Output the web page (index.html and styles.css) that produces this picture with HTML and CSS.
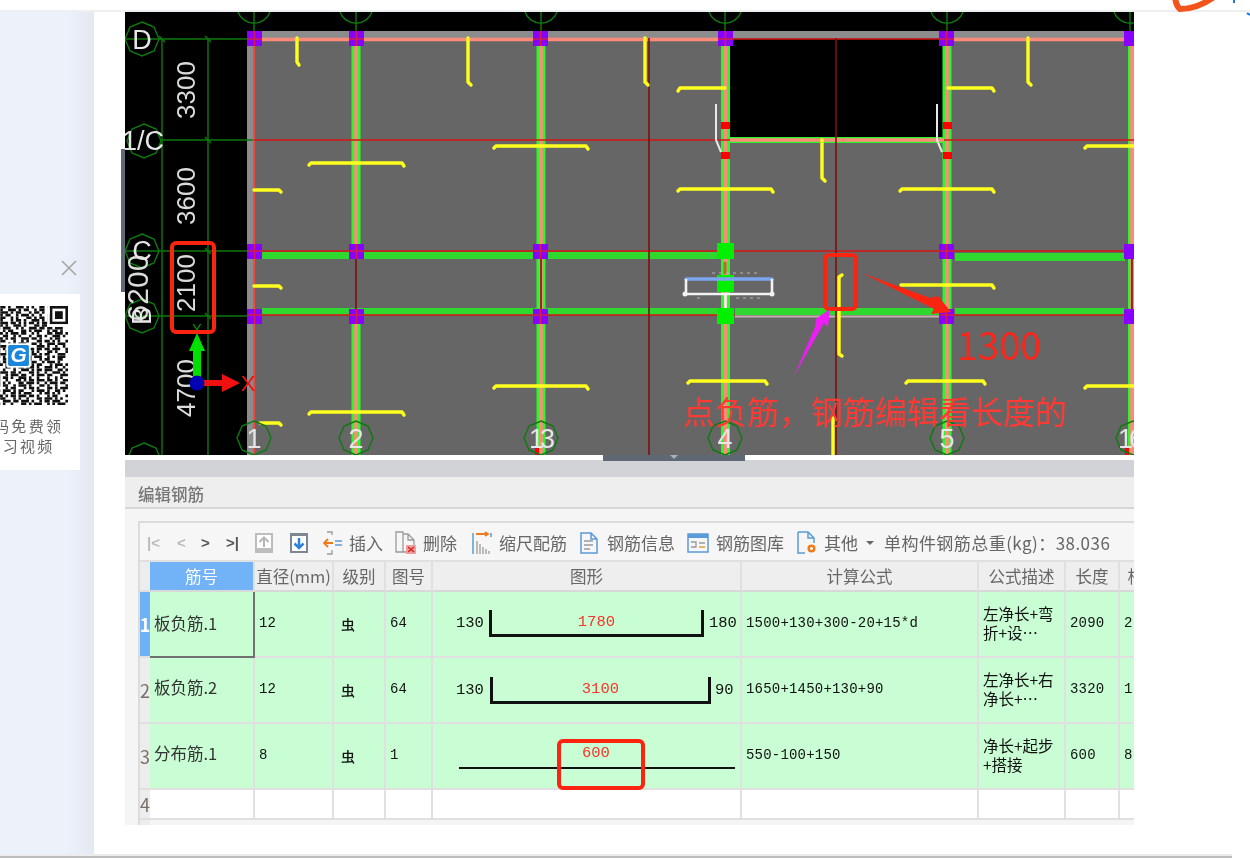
FILE: index.html
```html
<!DOCTYPE html>
<html lang="zh-CN">
<head>
<meta charset="utf-8">
<title>编辑钢筋</title>
<link rel="stylesheet" href="styles.css">
</head>
<body>
<div class="page">
  <header class="topbar">
    <svg class="brand" viewBox="0 0 80 14" width="80" height="14" aria-hidden="true">
      <path class="brand-o" d="M3 -3Q4 6 8 9Q25 9 42 -3"/>
      <path class="brand-b" d="M62 0v3"/>
      <path class="brand-b" d="M75 13q2 2 5 2"/>
    </svg>
  </header>
  <div class="main">
    <aside class="side">
      <svg class="close" viewBox="0 0 16 16" width="16" height="16" aria-hidden="true"><path d="M1 1L15 15M15 1L1 15"/></svg>
      <div class="qr-card">
        <div class="qr">
          <svg viewBox="0 0 38 38" width="99" height="99" aria-hidden="true">
            <g class="qr-rows">
              <path d="M12 .5H38" stroke-dasharray="2 1 1 2 3 1 1 1 1 2 2 1 1 9"/>
              <path d="M12 1.5H38" stroke-dasharray="1 2 3 1 1 1 2 2 1 1 2 11"/>
              <path d="M12 2.5H38" stroke-dasharray="3 1 1 1 2 3 1 1 2 1 1 9"/>
              <path d="M12 3.5H38" stroke-dasharray="1 1 2 2 1 1 3 1 1 2 1 2 1 9"/>
              <path d="M12 4.5H38" stroke-dasharray="2 2 1 1 1 3 2 1 1 1 2 1 2 9"/>
              <path d="M12 5.5H38" stroke-dasharray="1 3 1 1 2 1 1 2 3 1 1 1 2 9"/>
              <path d="M12 6.5H38" stroke-dasharray="3 1 2 1 1 1 1 1 2 1 1 1 3 9"/>
              <path d="M12 7.5H38" stroke-dasharray="1 1 1 2 3 1 1 3 2 1 2 9"/>
              <path d="M0 8.5H38" stroke-dasharray="2 1 3 2 1 1 2 1 3 2 1 1 1 2 3 1 2 1 2 1 3"/>
              <path d="M0 9.5H38" stroke-dasharray="1 2 2 1 3 1 1 2 1 1 2 3 2 1 1 1 3 2 1 1 2 1"/>
              <path d="M0 10.5H38" stroke-dasharray="3 1 1 2 1 3 2 1 1 1 3 1 2 2 1 1 1 3 2 1"/>
              <path d="M0 11.5H38" stroke-dasharray="1 1 3 1 2 1 1 3 2 2 1 1 1 3 1 2 2 1 1 2 3"/>
              <path d="M0 12.5H38" stroke-dasharray="2 3 1 1 1 2 3 1 1 1 2 2 3 1 2 1 1 3 1 1"/>
              <path d="M0 13.5H38" stroke-dasharray="1 1 2 2 3 1 1 1 2 3 1 2 1 1 1 3 2 1 2 1 1"/>
              <path d="M0 14.5H38" stroke-dasharray="3 2 1 1 2 1 2 3 1 1 1 1 3 2 2 1 1 2 3 1"/>
              <path d="M0 15.5H38" stroke-dasharray="1 2 1 3 1 2 1 1 3 2 1 1 2 1 1 3 3 1 1 2"/>
              <path d="M0 16.5H38" stroke-dasharray="2 1 1 1 3 2 2 1 1 3 1 2 1 1 3 1 2 1 2 1 3"/>
              <path d="M0 17.5H38" stroke-dasharray="1 3 2 1 1 1 3 2 2 1 3 1 1 2 1 1 1 3 2 1"/>
              <path d="M0 18.5H38" stroke-dasharray="3 1 1 2 2 1 1 1 3 1 2 2 1 3 2 1 1 1 2 3"/>
              <path d="M0 19.5H38" stroke-dasharray="1 1 3 1 1 3 2 1 1 2 1 1 3 1 2 1 3 2 1 1"/>
              <path d="M0 20.5H38" stroke-dasharray="2 2 1 1 3 1 1 2 3 1 2 1 1 2 1 3 1 1 2 3"/>
              <path d="M0 21.5H38" stroke-dasharray="1 3 3 1 1 2 1 1 2 3 1 1 3 1 2 2 1 1 3 1"/>
              <path d="M0 22.5H38" stroke-dasharray="3 1 2 2 1 1 3 1 1 1 2 3 1 2 1 1 2 3 1 1"/>
              <path d="M0 23.5H38" stroke-dasharray="1 2 1 1 2 3 1 3 2 1 1 1 2 1 3 1 1 2 3 1"/>
              <path d="M0 24.5H38" stroke-dasharray="2 1 3 1 1 1 2 2 1 3 1 2 3 1 1 1 2 1 3 2"/>
              <path d="M0 25.5H38" stroke-dasharray="1 1 1 3 2 2 1 1 3 1 2 1 1 3 2 1 1 2 1 2 3"/>
              <path d="M0 26.5H38" stroke-dasharray="3 2 1 1 1 3 1 2 1 1 3 1 2 2 1 1 3 1 2 3"/>
              <path d="M0 27.5H38" stroke-dasharray="1 1 2 3 1 1 3 1 2 1 1 2 3 1 1 2 1 3 1 2 1"/>
              <path d="M0 28.5H38" stroke-dasharray="2 3 1 1 3 1 1 2 1 3 2 1 1 1 2 1 3 1 2 1 1"/>
              <path d="M0 29.5H38" stroke-dasharray="1 2 2 1 1 2 3 1 1 1 1 3 2 1 3 1 1 2 1 1 3"/>
              <path d="M0 30.5H38" stroke-dasharray="3 1 1 1 2 3 1 1 2 2 1 1 3 1 1 3 2 1 1 2 1"/>
              <path d="M0 31.5H38" stroke-dasharray="1 3 2 2 1 1 1 3 1 1 2 3 1 1 2 1 1 3 2 1 1"/>
              <path d="M0 32.5H38" stroke-dasharray="2 1 1 3 1 2 2 1 3 1 1 1 2 3 1 1 3 1 1 2"/>
              <path d="M0 33.5H38" stroke-dasharray="1 1 3 1 2 1 1 3 1 2 2 1 1 1 3 3 1 1 2 1 1"/>
              <path d="M0 34.5H38" stroke-dasharray="3 2 1 2 1 1 3 1 1 1 2 1 3 1 2 1 1 3 1 1 2"/>
              <path d="M0 35.5H38" stroke-dasharray="1 1 2 1 3 2 1 1 2 3 1 1 1 2 1 3 2 1 3 1 1"/>
              <path d="M0 36.5H38" stroke-dasharray="2 2 1 3 1 1 1 2 3 1 2 1 3 1 1 2 1 1 2 1 3"/>
              <path d="M0 37.5H38" stroke-dasharray="1 3 2 1 1 3 1 1 1 2 1 3 2 1 1 1 3 2 1 1 1"/>
            </g>
            <rect class="qr-ink" x="31" y="0" width="7" height="7"/>
            <rect class="qr-paper" x="32" y="1" width="5" height="5"/>
            <rect class="qr-ink" x="33" y="2" width="3" height="3"/>
            <rect class="qr-paper" x="30" y="0" width="1" height="8"/>
            <rect class="qr-paper" x="30" y="7" width="8" height="1"/>
            <rect class="qr-logo-edge" x="14.3" y="14.3" width="9.4" height="9.4" rx="1"/>
            <rect class="qr-logo" x="15" y="15" width="8" height="8" rx=".6"/>
            <text class="qr-g" x="19" y="21.6">G</text>
          </svg>
        </div>
        <p class="qr-text">扫码免费领<br>学习视频</p>
      </div>
    </aside>

    <section class="content">
      <div class="cad">
        <svg class="cad-svg" viewBox="125 12 1009 443" width="1009" height="443" role="img" aria-label="结构平面图">
          <defs>
            <polygon id="oct" points="0,-17 12,-12 17,0 12,12 0,17 -12,12 -17,0 -12,-12"/>
          </defs>
          <rect class="c-black" x="125" y="12" width="1009" height="443"/>
          <rect class="c-floor" x="247" y="31" width="887" height="424"/>
          <rect class="c-strip" x="247" y="31" width="887" height="7"/>
          <rect class="c-strip" x="247" y="31" width="7" height="424"/>
          <rect class="c-black" x="730" y="39" width="214" height="98"/>

          <!-- axis lines -->
          <g class="l-axis">
            <path d="M162 39V455M208 39V455"/>
            <path d="M125 39H254M160 140H254M125 251H254M125 316H254"/>
            <path d="M254 12V38M356 12V38M541 12V38M725 12V38M947 12V38M1130 12V38"/>
            <path d="M159 36l6 6M205 36l6 6M205 137l6 6M205 248l6 6M205 313l6 6"/>
            <path d="M238 12a17 17 0 0 0 32 0M340 12a17 17 0 0 0 32 0M525 12a17 17 0 0 0 32 0M709 12a17 17 0 0 0 32 0M931 12a17 17 0 0 0 32 0M1114 12a17 17 0 0 0 32 0"/>
            <use href="#oct" x="142" y="39"/>
            <use href="#oct" x="144" y="141"/>
            <use href="#oct" x="142" y="251"/>
            <use href="#oct" x="142" y="316"/>
            <use href="#oct" x="144" y="460"/>
          </g>

          <!-- beams -->
          <g class="b-green">
            <rect x="351.500" y="38" width="9" height="213"/>
            <rect x="351.500" y="316" width="9" height="139"/>
            <rect x="536.500" y="38" width="9" height="417"/>
            <rect x="721" y="38" width="9" height="417"/>
            <rect x="942.500" y="38" width="9" height="417"/>
            <rect x="1128" y="38" width="6" height="417"/>
            <rect x="725" y="137" width="222" height="6"/>
          </g>
          <g class="b-green-h">
            <rect x="262" y="252" width="455" height="7"/>
            <rect x="955" y="253" width="170" height="8"/>
            <rect x="262" y="308" width="455" height="7"/>
            <rect x="735" y="308" width="205" height="7"/>
            <rect x="955" y="308" width="170" height="7"/>
          </g>
          <g class="b-salmon">
            <path d="M254 39.500H730M944 39.500H1134"/>
            <path d="M356 38V251M356 316V455M541 38V455M725.500 38V455M947 38V455M1132 38V455"/>
            <path d="M730 140H944"/>
          </g>
          <path class="b-pale" d="M735 316.500H940"/>
          <path class="b-edge" d="M254 38V455"/>
          <g class="l-red">
            <path d="M254 140H730M944 140H1134M254 251H1134M254 315H735M940 315H1134M730 39H944"/>
          </g>
          <g class="l-dark">
            <path d="M649 38V455M836 38V455M356 251V316M541 251V316M1132 251V316"/>
          </g>

          <!-- columns -->
          <g class="col">
            <rect x="247" y="31" width="15" height="15"/><rect x="349" y="31" width="15" height="15"/><rect x="533" y="31" width="15" height="15"/><rect x="718" y="31" width="15" height="15"/><rect x="939" y="31" width="15" height="15"/><rect x="1124" y="31" width="10" height="15"/>
            <rect x="247" y="244" width="15" height="15"/><rect x="349" y="244" width="15" height="15"/><rect x="533" y="244" width="15" height="15"/><rect x="939" y="244" width="15" height="15"/><rect x="1124" y="244" width="10" height="15"/>
            <rect x="247" y="309" width="15" height="15"/><rect x="349" y="309" width="15" height="15"/><rect x="533" y="309" width="15" height="15"/><rect x="939" y="309" width="15" height="15"/><rect x="1124" y="309" width="10" height="15"/>
          </g>
          <g class="col-cross">
            <path d="M247 39H262M349 39H364M533 39H548M718 39H733M939 39H954M247 251H262M349 251H364M533 251H548M939 251H954M247 315H262M349 315H364M533 315H548M939 315H954"/>
            <path d="M254.500 31V46M356.500 31V46M540.500 31V46M725.500 31V46M946.500 31V46M254.500 244V259M356.500 244V259M540.500 244V259M946.500 244V259M254.500 309V324M356.500 309V324M540.500 309V324M946.500 309V324"/>
          </g>

          <!-- bars -->
          <g class="bar-y">
            <path d="M297 38V62l2 3"/><path d="M468 38V82l3 3"/><path d="M645 38V82l3 3"/><path d="M1028 38V82l3 3"/><path d="M822 140V178l3 3"/>
            <path d="M309 165l2-2H402l2 3"/><path d="M494 148l2-2H586l2 3"/><path d="M678 91l2-3H725"/><path d="M678 191l2-2H771l2 3"/>
            <path d="M948 88H992l2 3"/><path d="M900 191l2-2H992l2 3"/><path d="M901 285H992l2 3"/><path d="M1085 148l2-2H1134"/><path d="M1085 388l2-2H1134"/>
            <path d="M254 190H279l2 2"/><path d="M254 286H279l2 2"/><path d="M309 414l2-2H402l2 3"/><path d="M260 423H279l2 2"/><path d="M494 388l2-2H586l2 3"/>
            <path d="M688 383l2-2H765l2 3"/><path d="M906 383l2-2H983l2 3"/>
            <path d="M842 275l-3 2V354l3 2"/><path d="M833 418V455"/>
          </g>

          <!-- selected element -->
          <g class="col-g">
            <rect x="717" y="243" width="17" height="16"/><rect x="717" y="275" width="17" height="17"/><rect x="717" y="308" width="17" height="16"/>
          </g>
          <path class="el-blue" d="M686 279H772"/>
          <path class="el-white" d="M686 279V294H772V279M725.500 294V308"/>
          <circle class="el-dot" cx="685" cy="294" r="2.500"/><circle class="el-dot" cx="772" cy="294" r="2.500"/>
          <path class="el-tick" d="M725 262V274"/>
          <path class="el-fleck" d="M712 273H758M697 298H700M736 298H760"/>
          <g class="col-r">
            <rect x="721" y="122" width="9" height="7"/><rect x="721" y="152" width="9" height="7"/><rect x="943" y="122" width="9" height="7"/><rect x="943" y="152" width="9" height="7"/>
            <rect x="535" y="447" width="4" height="8"/><rect x="1125" y="447" width="4" height="8"/>
          </g>
          <path class="el-thin" d="M716 104V140L721 152"/>
          <path class="el-thin" d="M937 104V140L942 152"/>

          <!-- bottom axis bubbles -->
          <g class="l-axis">
            <use href="#oct" x="254" y="438"/><use href="#oct" x="356" y="438"/><use href="#oct" x="541" y="438"/><use href="#oct" x="725" y="438"/><use href="#oct" x="947" y="438"/><use href="#oct" x="1133" y="438"/>
          </g>

          <!-- labels -->
          <g class="t-dim">
            <text x="186" y="99" transform="rotate(-90 186 90)">3300</text>
            <text x="186" y="205" transform="rotate(-90 186 196)">3600</text>
            <text x="186" y="292" transform="rotate(-90 186 283)">2100</text>
            <text x="186" y="397" transform="rotate(-90 186 388)">4700</text>
          </g>
          <text class="t-dim t-big" x="138" y="298" transform="rotate(-90 138 288)">6200</text>
          <g class="t-axis">
            <text x="142" y="49">D</text><text x="143" y="150">1/C</text><text x="142" y="260">C</text>
            <text x="254" y="448">1</text><text x="356" y="448">2</text><text class="t-tight" x="540" y="448">13</text><text x="725" y="448">4</text><text x="947" y="448">5</text><text class="t-tight" x="1129" y="448">16</text>
          </g>
          <text class="t-axis" x="141" y="326" transform="rotate(-90 141 316)">B</text>

          <!-- origin -->
          <path class="ax-g" d="M197 382V356"/><polygon class="ax-gf" points="197,333 205,351 189,351"/><rect class="ax-gf" x="193" y="350" width="8" height="28"/>
          <path class="ax-r" d="M197 383H225"/><polygon class="ax-rf" points="222,374 240,383 222,392"/>
          <circle class="ax-b" cx="197" cy="383" r="7.500"/>
          <text class="t-y" x="197" y="334">Y</text>
          <text class="t-x" x="248" y="391">X</text>

          <!-- annotations -->
          <rect class="mark" x="172" y="243" width="42" height="89" rx="4"/>
          <rect class="mark" x="825" y="255" width="31" height="54" rx="4"/>
          <polygon class="arrow-r" points="862,273 930,298 938,296 951,312 931,314 934,309"/>
          <polygon class="arrow-p" points="794,376 815,327 816,319 830,309 828,327 824,323"/>
          <text class="note n1" x="957" y="360">1300</text>
          <text class="note n2" x="683" y="424">点负筋，钢筋编辑看长度的</text>
        </svg>
        <div class="handle-v"></div>
      </div>

      <div class="splitter"><div class="handle-h"><span class="tri"></span></div></div>

      <div class="editor">
        <div class="strip"></div>
        <div class="title">编辑钢筋</div>
        <div class="body">
          <div class="panel">
            <div class="toolbar">
              <span class="nav nav-off nav-a">|&lt;</span>
              <span class="nav nav-off nav-b">&lt;</span>
              <span class="nav nav-c">&gt;</span>
              <span class="nav nav-d">&gt;|</span>

              <svg class="ic ic-up" viewBox="0 0 18 20" width="18" height="20" aria-hidden="true"><rect class="i-greyf" x="0" y="0" width="18" height="20"/><rect class="i-white" x="2" y="2" width="14" height="13"/><path class="i-greys" d="M9 14V5M4.500 9L9 4.500 13.500 9"/><rect class="i-greyf" x="2" y="16" width="14" height="3"/></svg>
              <svg class="ic ic-down" viewBox="0 0 18 20" width="18" height="20" aria-hidden="true"><rect class="i-dark" x="0" y="0" width="18" height="20"/><rect class="i-white" x="2" y="3" width="14" height="15"/><path class="i-blue2" d="M9 5V15M4.500 10.500L9 15 13.500 10.500"/></svg>

              <span class="tool t-ins"><svg viewBox="0 0 20 24" width="20" height="24" aria-hidden="true"><path class="i-grey1" d="M4 1H9V4M4 23H9V19"/><path class="i-orange" d="M10 12H1M5 8L1 12 5 16"/><path class="i-blue1" d="M12 10H19M12 14H19"/></svg>插入</span>
              <span class="tool t-del"><svg viewBox="0 0 22 24" width="22" height="24" aria-hidden="true"><path class="i-grey1" d="M1 1H8V21H1ZM8 3H13L19 9V14M13 3V9H19M8 21H12"/><rect class="i-red" x="11" y="14" width="10" height="9"/><path class="i-redx" d="M13 16L19 21M19 16L13 21"/></svg>删除</span>
              <span class="tool t-scale"><svg viewBox="0 0 20 24" width="20" height="24" aria-hidden="true"><path class="i-blue1" d="M1 2V23M19 2V6"/><path class="i-orange" d="M4 3H16M13 1L16 3 13 5"/><path class="i-grey1" d="M5 10V23M8 13V23M11 16V23M14 18V23M17 20V23"/></svg>缩尺配筋</span>
              <span class="tool t-info"><svg viewBox="0 0 18 22" width="18" height="22" aria-hidden="true"><path class="i-blue1" d="M1 1H11L17 7V21H1ZM11 1V7H17"/><path class="i-grey1" d="M4 9H13M4 13H13M4 17H10"/></svg>钢筋信息</span>
              <span class="tool t-lib"><svg viewBox="0 0 22 20" width="22" height="20" aria-hidden="true"><rect class="i-blue1" x="1" y="1" width="20" height="18"/><rect class="i-bluef" x="1" y="1" width="20" height="4"/><path class="i-grey1" d="M4 9H9V14H4M12 10H18"/><path class="i-multi" d="M12 14H18"/></svg>钢筋图库</span>
              <span class="tool t-other"><svg viewBox="0 0 21 24" width="21" height="24" aria-hidden="true"><path class="i-blue1" d="M1 1H11L17 7V12M1 1V22H8M11 1V7H17"/><circle class="i-gear" cx="14.500" cy="17.500" r="4"/><circle class="i-white" cx="14.500" cy="17.500" r="1.500"/></svg>其他</span>
              <span class="drop"></span>
              <span class="total">单构件钢筋总重(kg)：38.036</span>
            </div>

            <div class="grid">
              <div class="c rn"></div>
              <div class="c th th-on">筋号</div>
              <div class="c th">直径(mm)</div>
              <div class="c th">级别</div>
              <div class="c th">图号</div>
              <div class="c th">图形</div>
              <div class="c th">计算公式</div>
              <div class="c th">公式描述</div>
              <div class="c th">长度</div>
              <div class="c th">根数</div>

              <div class="c rn rn-on">1</div>
              <div class="c td name sel">板负筋.1</div>
              <div class="c td val">12</div>
              <div class="c td lvl">虫</div>
              <div class="c td val">64</div>
              <div class="c td shape s1"><span class="dim">130</span><span class="rebar">1780</span><span class="dim">180</span></div>
              <div class="c td val">1500+130+300-20+15*d</div>
              <div class="c td desc">左净长+弯<br>折+设⋯</div>
              <div class="c td val">2090</div>
              <div class="c td val">2</div>

              <div class="c rn">2</div>
              <div class="c td name">板负筋.2</div>
              <div class="c td val">12</div>
              <div class="c td lvl">虫</div>
              <div class="c td val">64</div>
              <div class="c td shape s2"><span class="dim">130</span><span class="rebar">3100</span><span class="dim">90</span></div>
              <div class="c td val">1650+1450+130+90</div>
              <div class="c td desc">左净长+右<br>净长+⋯</div>
              <div class="c td val">3320</div>
              <div class="c td val">1</div>

              <div class="c rn">3</div>
              <div class="c td name">分布筋.1</div>
              <div class="c td val">8</div>
              <div class="c td lvl">虫</div>
              <div class="c td val">1</div>
              <div class="c td shape s3"><span class="line-num">600</span><span class="line"></span><span class="mark-box"></span></div>
              <div class="c td val">550-100+150</div>
              <div class="c td desc">净长+起步<br>+搭接</div>
              <div class="c td val">600</div>
              <div class="c td val">8</div>

              <div class="c rn">4</div>
              <div class="c blank"></div>
              <div class="c blank"></div>
              <div class="c blank"></div>
              <div class="c blank"></div>
              <div class="c blank"></div>
              <div class="c blank"></div>
              <div class="c blank"></div>
              <div class="c blank"></div>
              <div class="c blank"></div>

              <div class="c rn rn-end"></div>
            </div>
          </div>
        </div>
      </div>
    </section>
  </div>
  <footer class="foot"></footer>
</div>
</body>
</html>
```
FILE: styles.css
```css
* { box-sizing: border-box; }
html, body { margin: 0; padding: 0; background: #fff; }
body { font-family: "Noto Sans CJK SC", "Liberation Sans", sans-serif; overflow: hidden; }
.page { width: 1250px; height: 858px; display: flex; flex-direction: column; position: relative; overflow: hidden; }

.topbar { height: 12px; flex: none; background: #fff; border-bottom: 2px solid #eeeff1; position: relative; }
.brand { position: absolute; left: 1172px; top: 0; overflow: visible; }
.brand-o { fill: none; stroke: #f2541b; stroke-width: 6; stroke-linecap: round; }
.brand-b { fill: none; stroke: #1a7be6; stroke-width: 2; }

.main { flex: 1; display: flex; min-height: 0; }
.foot { height: 4px; width: 1232px; flex: none; background: #bdbdbd; border-top: 2px solid #ececec; }

/* sidebar */
.side { width: 94px; flex: none; padding-top: 248px; overflow: hidden; background: linear-gradient(90deg, #edf2fa 0, #edf2fa 70%, #e4e8f0 100%); }
.close { display: block; margin-left: 61px; margin-bottom: 18px; }
.close path { fill: none; stroke: #a3a5a8; stroke-width: 1.6; }
.qr-card { width: 120px; height: 176px; margin-left: -40px; background: #fff; padding-top: 12px; filter: blur(.35px); }
.qr { width: 99px; height: 99px; margin-left: 9px; }
.qr svg { display: block; }
.qr-rows path { fill: none; stroke: #111; stroke-width: 1; }
.qr-ink { fill: #111; }
.qr-paper { fill: #fff; }
.qr-logo-edge { fill: #fff; }
.qr-logo { fill: #1a86dc; }
.qr-g { font-family: "Liberation Sans", sans-serif; font-size: 8px; font-weight: 700; font-style: italic; fill: #fff; text-anchor: middle; }
.qr-text { margin: 11px 0 0; font-size: 15px; line-height: 20px; letter-spacing: 2.3px; color: #666; text-align: center; }

/* drawing */
.content { width: 1009px; flex: none; margin-left: 31px; position: relative; }
.cad { height: 443px; position: relative; overflow: visible; }
.cad-svg { display: block; filter: blur(.4px); font-family: "Liberation Sans", sans-serif; }
.handle-v { position: absolute; left: -4px; top: 137px; width: 4px; height: 143px; background: #5f6875; }

.c-black { fill: #000; }
.c-floor { fill: #666; }
.c-strip { fill: #8c8c8c; }
.l-axis path, .l-axis use { fill: none; stroke: #0c7a0c; stroke-width: 1.4; }
.b-green rect { fill: #2ef52e; }
.b-green-h rect { fill: #2ed82e; }
.b-salmon path { fill: none; stroke: #ff8a78; stroke-width: 3.6; }
.b-pale { fill: none; stroke: #c8b0b0; stroke-width: 2; }
.b-edge { fill: none; stroke: #f04a40; stroke-width: 2; }
.l-red path { fill: none; stroke: #d81414; stroke-width: 1.5; }
.l-dark path { fill: none; stroke: #7a1212; stroke-width: 1.6; }
.col rect { fill: #8a00ff; }
.col-cross path { fill: none; stroke: #d02048; stroke-width: 1.6; }
.col-g rect { fill: #00f000; }
.col-r rect { fill: #ff0000; }
.bar-y path { fill: none; stroke: #ffff1e; stroke-width: 3.4; stroke-linecap: round; stroke-linejoin: round; }
.el-blue { fill: none; stroke: #7ba6f0; stroke-width: 3.5; stroke-linecap: round; }
.el-white { fill: none; stroke: #f2f2f2; stroke-width: 2.6; }
.el-dot { fill: #f2f2f2; }
.el-tick { fill: none; stroke: #9a7b20; stroke-width: 3; }
.el-fleck { fill: none; stroke: #b4b4b4; stroke-width: 1; stroke-dasharray: 3 4; }
.el-thin { fill: none; stroke: #e8e8e8; stroke-width: 2; }
.t-dim text, .t-dim.t-big { fill: #dcdcdc; font-size: 26px; text-anchor: middle; }
.t-dim.t-big { font-size: 30px; }
.t-axis text, text.t-axis { fill: #e6e6e6; font-size: 27px; text-anchor: middle; }
.t-axis .t-tight { letter-spacing: -4px; }
.ax-g { fill: none; stroke: #00e000; stroke-width: 4; }
.ax-gf { fill: #00e000; }
.ax-r { fill: none; stroke: #f01010; stroke-width: 6; }
.ax-rf { fill: #f01010; }
.ax-b { fill: #0000b4; }
.t-y { fill: #0c9a0c; font-size: 14px; text-anchor: middle; }
.t-x { fill: #f01010; font-size: 22px; text-anchor: middle; }
.mark { fill: none; stroke: #fb2410; stroke-width: 4; }
.arrow-r { fill: #fb2410; }
.arrow-p { fill: #ee1cf5; }
.note { font-family: "Noto Sans CJK SC", sans-serif; fill: #f8281c; }
.n1 { font-size: 38px; }
.n2 { font-size: 32px; fill: #ff3a34; }

.splitter { height: 5px; background: #fff; position: relative; }
.handle-h { position: absolute; left: 478px; top: 0; width: 142px; height: 6px; background: #5f6875; z-index: 1; }
.tri { position: absolute; left: 67px; top: 0; border: 4px solid transparent; border-top: 4px solid #aab0b8; border-bottom: 0; }

/* editor */
.editor { height: 365px; overflow: hidden; filter: blur(.35px); background: #f5f5f5; }
.strip { height: 17px; background: #d2d3d7; }
.title { height: 32px; background: #eee; border-bottom: 2px solid #d6d6d6; padding: 2px 0 0 13px; font-size: 16.5px; line-height: 30px; color: #777; font-weight: 500; }
.body { padding: 12px 0 0 13px; }
.panel { width: 1040px; border-top: 2px solid #dcdcdc; border-left: 2px solid #dcdcdc; }

.toolbar { height: 39px; display: flex; align-items: center; padding-top: 2px; background: #f6f6f6; font-size: 17px; color: #666; white-space: nowrap; border-bottom: 2px solid #e0e0e0; }
.nav { font-family: "Liberation Sans", sans-serif; font-size: 15px; font-weight: 700; color: #555; width: 16px; }
.nav-off { color: #bbb; }
.nav-a { margin-left: 7px; }
.nav-b { margin-left: 14px; }
.nav-c { margin-left: 8px; }
.nav-d { margin-left: 9px; color: #555; }
.ic { flex: none; }
.ic-up { margin-left: 13px; }
.ic-down { margin-left: 17px; }
.tool { display: flex; align-items: center; flex: none; }
.tool svg { flex: none; }
.t-ins { margin-left: 15px; gap: 6px; }
.t-del { margin-left: 12px; gap: 6px; }
.t-scale { margin-left: 15px; gap: 7px; }
.t-info { margin-left: 13px; gap: 9px; }
.t-lib { margin-left: 12px; gap: 7px; }
.t-other { margin-left: 13px; gap: 6px; }
.drop { margin-left: 8px; border: 4px solid transparent; border-top: 4px solid #666; border-bottom: 0; }
.total { margin-left: 10px; letter-spacing: .45px; }

.i-greyf { fill: #bdbdbd; }
.i-dark { fill: #7d8791; }
.i-white { fill: #fff; }
.i-greys { fill: none; stroke: #b5b5b5; stroke-width: 2; }
.i-blue2 { fill: none; stroke: #2f80d8; stroke-width: 2.5; }
.i-grey1 { fill: none; stroke: #9a9a9a; stroke-width: 1.3; }
.i-orange { fill: none; stroke: #f07a1a; stroke-width: 1.8; }
.i-blue1 { fill: none; stroke: #5b9ad8; stroke-width: 1.5; }
.i-bluef { fill: #5b9ad8; }
.i-red { fill: #f0a0a0; }
.i-redx { fill: none; stroke: #d82020; stroke-width: 1.5; }
.i-multi { fill: none; stroke: #e0a030; stroke-width: 1.5; }
.i-gear { fill: #f07a1a; }

.grid { display: grid; grid-template-columns: 10px 105px 79px 52px 47px 309px 237px 87px 54px 50px; grid-template-rows: 30px 66px 66px 66px 30px 5px; }
.c { border-right: 2px solid #e0e0e0; border-bottom: 2px solid #e0e0e0; display: flex; align-items: center; min-width: 0; overflow: hidden; }
.th { background: #eee; justify-content: center; font-size: 16.5px; color: #666; white-space: nowrap; border-bottom-color: #d8d8d8; }
.th-on { background: #72b2f7; color: #fff; }
.rn { background: #ededed; justify-content: center; font-size: 18px; color: #7a6f66; border-right: 0; }
.rn-on { background: #6fb1f6; color: #fff; font-weight: 700; }
.rn-end { border-bottom: 0; }
.td { background: #c9fdd3; color: #111; padding: 0 0 6px 4px; }
.name { font-size: 16.5px; color: #333; }
.sel { border-right-color: #707070; border-bottom-color: #707070; padding-bottom: 2px; }
.val { font-family: "Liberation Mono", monospace; font-size: 14px; letter-spacing: .2px; padding-bottom: 2px; }
.lvl { padding: 0 0 0 7px; font-size: 14px; font-weight: 500; }
.desc { font-size: 15.5px; line-height: 19px; padding: 0 0 3px 4px; white-space: nowrap; }
.blank { background: #fff; }

.shape { position: relative; overflow: visible; padding: 0; font-family: "Liberation Mono", monospace; font-size: 15.5px; }
.dim { flex: none; padding-top: 6px; }
.rebar { flex: none; display: flex; align-items: flex-start; justify-content: center; padding-top: 3px; border: 3px solid #111; border-top: 0; color: #f8352c; }
.s1 { padding: 0 0 9px 23px; }
.s1 .rebar { width: 215px; height: 27px; margin: 8px 5px 0 5px; }
.s2 { padding: 0 0 7px 23px; }
.s2 .rebar { width: 221px; height: 27px; margin: 8px 4px 0 6px; }
.s3 { display: block; padding: 0; }
.line-num { position: absolute; left: 149px; top: 20px; color: #f8352c; }
.line { position: absolute; left: 26px; top: 43px; width: 276px; height: 2px; background: #111; }
.mark-box { position: absolute; left: 124px; top: 15px; width: 88px; height: 51px; border: 4px solid #fb2410; border-radius: 6px; z-index: 2; }
```
